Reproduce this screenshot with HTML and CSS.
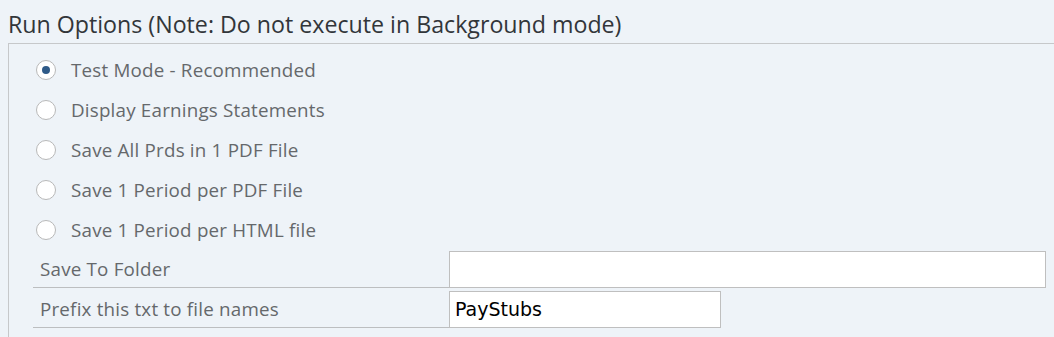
FILE: index.html
```html
<!DOCTYPE html>
<html>
<head>
<meta charset="utf-8">
<link rel="stylesheet" href="styles.css">
</head>
<body>
<div class="page">
  <div class="title">Run Options (Note: Do not execute in Background mode)</div>
  <div class="group">
    <div class="radios">
      <div class="radio-row"><span class="radio checked"></span><span class="rlabel">Test Mode - Recommended</span></div>
      <div class="radio-row"><span class="radio"></span><span class="rlabel">Display Earnings Statements</span></div>
      <div class="radio-row"><span class="radio"></span><span class="rlabel">Save All Prds in 1 PDF File</span></div>
      <div class="radio-row"><span class="radio"></span><span class="rlabel">Save 1 Period per PDF File</span></div>
      <div class="radio-row"><span class="radio"></span><span class="rlabel">Save 1 Period per HTML file</span></div>
    </div>
    <div class="field-row">
      <div class="flabel">Save To Folder</div>
      <div class="input wide"></div>
    </div>
    <div class="field-row">
      <div class="flabel">Prefix this txt to file names</div>
      <div class="input narrow">PayStubs</div>
    </div>
  </div>
</div>
</body>
</html>
```
FILE: styles.css
```css
html, body {
  margin: 0;
  padding: 0;
  background: #eef3f8;
}
.page {
  width: 1054px;
  height: 337px;
  overflow: hidden;
  font-family: "Open Sans", "Liberation Sans", sans-serif;
}
.title {
  height: 43px;
  box-sizing: border-box;
  padding: 9px 0 0 8px;
  font-size: 23.2px;
  line-height: 30px;
  color: #32363a;
  white-space: nowrap;
}
.group {
  margin-left: 8px;
  border-top: 1px solid #c6c8ca;
  border-left: 1px solid #c6c8ca;
  height: 300px;
  padding-top: 4px;
  box-sizing: border-box;
}
.radio-row {
  height: 40px;
  display: flex;
  align-items: center;
  padding: 4px 0 0 27px;
  box-sizing: border-box;
}
.radio {
  width: 20px;
  height: 20px;
  box-sizing: border-box;
  border: 1px solid #b8b8b8;
  border-radius: 50%;
  background: #ffffff;
  display: flex;
  align-items: center;
  justify-content: center;
  flex: none;
}
.radio.checked::after {
  content: "";
  width: 8px;
  height: 8px;
  border-radius: 50%;
  background: #2f5a88;
}
.rlabel {
  margin-left: 15px;
  font-size: 18.8px;
  letter-spacing: 0.2px;
  color: #65686b;
  white-space: nowrap;
}
.field-row {
  display: flex;
  align-items: flex-end;
  height: 40px;
}
.flabel {
  margin-left: 24px;
  width: 416px;
  height: 40px;
  box-sizing: border-box;
  border-bottom: 1px solid #bcbec0;
  padding: 8px 0 0 7px;
  font-size: 18.8px;
  letter-spacing: 0.2px;
  line-height: 26px;
  color: #65686b;
  white-space: nowrap;
}
.input {
  height: 37px;
  box-sizing: border-box;
  border: 1px solid #bfbfbf;
  background: #ffffff;
  font-family: "DejaVu Sans", sans-serif;
  font-size: 19px;
  line-height: 35px;
  padding-left: 5px;
  color: #000000;
}
.input.wide {
  width: 597px;
}
.input.narrow {
  width: 272px;
}
```
